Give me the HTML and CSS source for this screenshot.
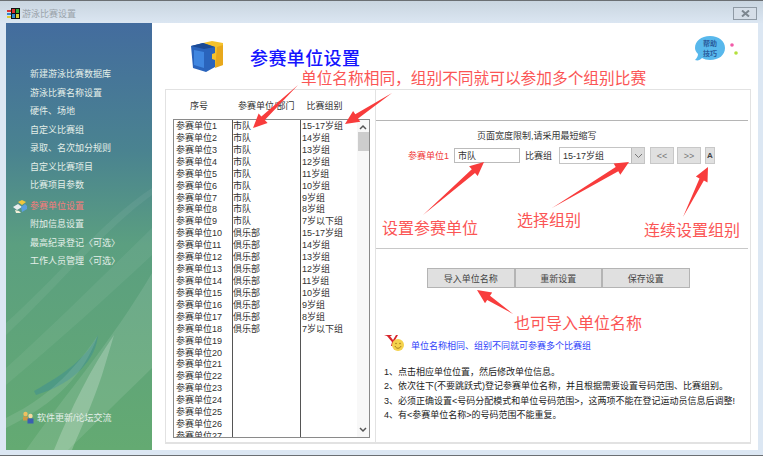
FILE: index.html
```html
<!DOCTYPE html>
<html lang="zh-CN">

<head>
  <meta charset="UTF-8">
  <title>游泳比赛设置</title>
  <link rel="stylesheet" href="styles.css">
</head>

<body>
  <div class="titlebar">
    <svg class="app-logo" width="13" height="11" viewBox="0 0 13 11">
      <rect x="0" y="2" width="4" height="2" fill="#d33" />
      <rect x="0" y="5" width="4" height="2" fill="#38c" />
      <rect x="0" y="8" width="4" height="2" fill="#dc3" />
      <rect x="4" y="0" width="9" height="11" fill="#111" />
      <rect x="5" y="1" width="3" height="4" fill="#d33" />
      <rect x="9" y="1" width="3" height="4" fill="#3a3" />
      <rect x="5" y="6" width="3" height="4" fill="#38c" />
      <rect x="9" y="6" width="3" height="4" fill="#dc3" />
    </svg>
    <span class="app-title">游泳比赛设置</span>
    <div class="close-btn">
      <svg width="9" height="7" viewBox="0 0 9 7">
        <path d="M1 0.5 L8 6.5 M8 0.5 L1 6.5" stroke="#7d8790" stroke-width="2" />
      </svg>
    </div>
  </div>

  <div class="window">
    <div class="sidebar">
      <svg class="swoosh" width="146" height="427" viewBox="0 0 146 427">
        <path d="M0 300 C50 255 100 195 146 165 L146 172 C100 205 50 265 0 312 Z" fill="#fff" opacity="0.06" />
        <path d="M0 345 C50 300 100 250 146 205 L146 232 C100 275 50 320 0 362 Z" fill="#fff" opacity="0.06" />
        <path d="M20 427 C60 370 105 320 146 250 L146 345 C110 380 85 405 62 427 Z" fill="#fff" opacity="0.1" />
        <path d="M28 368 C60 350 80 335 92 312 C90 335 70 360 30 372 Z" fill="#3f8f90" opacity="0.55" />
        <path d="M48 427 C65 385 85 345 108 312 L96 352 C85 385 75 405 66 427 Z" fill="#fff" opacity="0.22" />
        <path d="M0 395 C30 380 60 360 92 312 C75 360 40 385 0 405 Z" fill="#fff" opacity="0.1" />
      </svg>
      <ul class="nav">
        <li>新建游泳比赛数据库</li>
        <li>游泳比赛名称设置</li>
        <li>硬件、场地</li>
        <li>自定义比赛组</li>
        <li>录取、名次加分规则</li>
        <li>自定义比赛项目</li>
        <li>比赛项目参数</li>
        <li class="active">
          <svg class="active-icon" width="16" height="15" viewBox="0 0 16 15">
            <path d="M1 8 L6 5 L10 8 L5 11 Z" fill="#e8eef0" />
            <path d="M6 3 L10 1 L14 3 L10 6 Z" fill="#f2c83c" />
            <path d="M9 8 L13 5 L15 7 L15 10 L10 13 Z" fill="#5a9fe0" />
            <path d="M3 11 L7 12 L9 14 L4 14 Z" fill="#f4f0d8" />
          </svg>
          参赛单位设置
        </li>
        <li>附加信息设置</li>
        <li>最高纪录登记〈可选〉</li>
        <li>工作人员管理〈可选〉</li>
      </ul>
      <div class="forum">
        <svg width="12" height="13" viewBox="0 0 12 13">
          <circle cx="3.5" cy="3" r="2.2" fill="#f0c060" />
          <rect x="1" y="5.5" width="5" height="4" fill="#c94" />
          <circle cx="8.5" cy="5" r="2.2" fill="#f5d9a0" />
          <rect x="5.5" y="7.5" width="6" height="5" fill="#3a5fb0" />
        </svg>
        <span>软件更新/论坛交流</span>
      </div>
    </div>

    <div class="main">
      <div class="page-head">
        <svg class="cube" width="33" height="32" viewBox="0 0 33 32">
          <path d="M12 2 L21 0 L32 2 L32 24 L22 26 Z" fill="#f5c22c" />
          <path d="M26 6 L32 4 L32 24 L24 27 Z" fill="#e8a81c" />
          <path d="M0 5 L12 2 L24 6 L24 12 L21 13 L21 18 L24 19 L24 26 L15 31 L2 27 Z" fill="#2a64bc" />
          <path d="M0 5 L12 2 L24 6 L13 8 Z" fill="#1c4a94" />
          <path d="M3 9 L13 11 L13 27 L3 24 Z" fill="#3f86e0" />
        </svg>
        <h1>参赛单位设置</h1>
        <div class="help">
          <svg width="45" height="28" viewBox="0 0 45 28">
            <path d="M15 1 C24 1 30 6 30 13 C30 20 24 25 15 25 C12 25 9 24 7 23 C5 25 3 26 0 25 C2 23 3 21 3 19 C1 17 0 15 0 13 C0 6 6 1 15 1 Z" fill="#58b8ec" />
            <text x="15" y="11" class="help-text">帮助</text>
            <text x="15" y="21" class="help-text">技巧</text>
            <circle cx="37" cy="10" r="1.8" fill="#f25aa8" />
            <circle cx="41" cy="18" r="1.8" fill="#b4e03c" />
          </svg>
        </div>
      </div>

      <div class="panel">
        <div class="left-col">
          <div class="list-head">
            <span class="head-no">序号</span>
            <span class="head-unit">参赛单位/部门</span>
            <span class="head-group">比赛组别</span>
          </div>
          <div class="list-box">
            <div class="col col-no">
              <div>参赛单位1</div>
              <div>参赛单位2</div>
              <div>参赛单位3</div>
              <div>参赛单位4</div>
              <div>参赛单位5</div>
              <div>参赛单位6</div>
              <div>参赛单位7</div>
              <div>参赛单位8</div>
              <div>参赛单位9</div>
              <div>参赛单位10</div>
              <div>参赛单位11</div>
              <div>参赛单位12</div>
              <div>参赛单位13</div>
              <div>参赛单位14</div>
              <div>参赛单位15</div>
              <div>参赛单位16</div>
              <div>参赛单位17</div>
              <div>参赛单位18</div>
              <div>参赛单位19</div>
              <div>参赛单位20</div>
              <div>参赛单位21</div>
              <div>参赛单位22</div>
              <div>参赛单位23</div>
              <div>参赛单位24</div>
              <div>参赛单位25</div>
              <div>参赛单位26</div>
              <div>参赛单位27</div>
            </div>
            <div class="col col-unit">
              <div>市队</div>
              <div>市队</div>
              <div>市队</div>
              <div>市队</div>
              <div>市队</div>
              <div>市队</div>
              <div>市队</div>
              <div>市队</div>
              <div>市队</div>
              <div>俱乐部</div>
              <div>俱乐部</div>
              <div>俱乐部</div>
              <div>俱乐部</div>
              <div>俱乐部</div>
              <div>俱乐部</div>
              <div>俱乐部</div>
              <div>俱乐部</div>
              <div>俱乐部</div>
            </div>
            <div class="col col-group">
              <div>15-17岁组</div>
              <div>14岁组</div>
              <div>13岁组</div>
              <div>12岁组</div>
              <div>11岁组</div>
              <div>10岁组</div>
              <div>9岁组</div>
              <div>8岁组</div>
              <div>7岁以下组</div>
              <div>15-17岁组</div>
              <div>14岁组</div>
              <div>13岁组</div>
              <div>12岁组</div>
              <div>11岁组</div>
              <div>10岁组</div>
              <div>9岁组</div>
              <div>8岁组</div>
              <div>7岁以下组</div>
            </div>
            <div class="scrollbar">
              <svg width="8" height="6" viewBox="0 0 8 6">
                <path d="M1 5 L4 2 L7 5" fill="none" stroke="#555" stroke-width="1.5" />
              </svg>
              <div class="thumb"></div>
              <svg class="scroll-down" width="8" height="6" viewBox="0 0 8 6">
                <path d="M1 1 L4 4 L7 1" fill="none" stroke="#555" stroke-width="1.5" />
              </svg>
            </div>
          </div>
        </div>

        <div class="right-col">
          <div class="right-top"></div>
          <div class="form-section">
            <p class="limit-note">页面宽度限制,请采用最短缩写</p>
            <div class="form-row">
              <span class="unit-label">参赛单位1</span>
              <input class="unit-input" type="text" value="市队">
              <span class="group-label">比赛组</span>
              <div class="combo">
                <span>15-17岁组</span>
                <div class="combo-arrow">
                  <svg width="9" height="6" viewBox="0 0 9 6">
                    <path d="M1 1 L4.5 4.5 L8 1" fill="none" stroke="#777" stroke-width="1" />
                  </svg>
                </div>
              </div>
              <button class="nav-btn">&lt;&lt;</button>
              <button class="nav-btn">&gt;&gt;</button>
              <button class="a-btn">A</button>
            </div>
          </div>
          <div class="action-section">
            <div class="actions">
              <button>导入单位名称</button>
              <button>重新设置</button>
              <button>保存设置</button>
            </div>
            <div class="tip">
              <svg width="22" height="18" viewBox="0 0 22 18">
                <path d="M0 1 L8 1 L7 2 L6 2 L9 6 L12 1 L14 1 L10 8 L10 12 L7 12 L8 8 L3 2 Z" fill="#d8262c" />
                <circle cx="14" cy="11" r="6" fill="#f4d24c" />
                <path d="M11 12 C12 15 16 15 17 12" fill="none" stroke="#a87c1c" stroke-width="1" />
                <circle cx="12" cy="9.5" r="0.8" fill="#a87c1c" />
                <circle cx="16" cy="9.5" r="0.8" fill="#a87c1c" />
              </svg>
              <span>单位名称相同、组别不同就可参赛多个比赛组</span>
            </div>
            <ol class="notes">
              <li>1、点击相应单位位置&#xFF0C;然后修改单位信息。</li>
              <li>2、依次往下(不要跳跃式)登记参赛单位名称&#xFF0C;并且根据需要设置号码范围、比赛组别。</li>
              <li>3、必须正确设置&lt;号码分配模式和单位号码范围&gt;&#xFF0C;这两项不能在登记运动员信息后调整!</li>
              <li>4、有&lt;参赛单位名称&gt;的号码范围不能重复。</li>
            </ol>
          </div>
        </div>
      </div>
    </div>
  </div>

  <!-- red notes drawn on top of the screenshot -->
  <svg class="arrows" width="763" height="456" viewBox="0 0 763 456">
    <polygon points="298,85 264.8,120.1 267.6,123 253,128 258.6,113.6 261.4,116.5" />
    <polygon points="392,93 358.1,118.4 360.3,121.7 345,124 353.1,110.9 355.3,114.2" />
    <polygon points="423,215 475,173.1 477.7,176.1 484,162 469.1,166.3 471.8,169.3" />
    <polygon points="552,208 618.3,171.3 620.3,174.8 629,162 613.7,163.6 615.7,167.1" />
    <polygon points="683,217 703.9,180.6 707.5,182.4 708,167 695.9,176.6 699.5,178.4" />
    <polygon points="513,314 490,295.7 492.2,292.4 477,290 485,303.2 487.2,299.9" />
  </svg>
  <span class="mark mark-top">单位名称相同&#xFF0C;组别不同就可以参加多个组别比赛</span>
  <span class="mark mark-unit">设置参赛单位</span>
  <span class="mark mark-group">选择组别</span>
  <span class="mark mark-next">连续设置组别</span>
  <span class="mark mark-import">也可导入单位名称</span>
</body>

</html>
```

FILE: styles.css
```css
* {
  box-sizing: border-box;
}

body {
  margin: 0;
  width: 763px;
  height: 456px;
  position: relative;
  overflow: hidden;
  background-color: #dce7f3;
  font-family: "Liberation Sans", "Noto Sans CJK SC", sans-serif;
  font-size: 9px;
  color: #333;
  border-top: 1px solid #6b6f73;
  border-bottom: 1px solid #6b6f73;
}

/* title bar */
.titlebar {
  height: 22px;
  display: flex;
  align-items: center;
  padding: 3px 6px 0 7px;
  background: linear-gradient(#c9d5e0, #dbe6f2);
}

.app-title {
  margin-left: 2px;
  color: #9aa3aa;
  font-size: 9px;
}

.close-btn {
  margin-left: auto;
  width: 24px;
  height: 13px;
  display: flex;
  align-items: center;
  justify-content: center;
  border: 1px solid #8f9aa5;
  background-color: #d5dee8;
}

.window {
  height: 427px;
  display: flex;
  padding-left: 6px;
}

/* left menu */
.sidebar {
  width: 146px;
  height: 100%;
  position: relative;
  flex-shrink: 0;
  background: linear-gradient(#436c9e 0%, #4a8390 30%, #5b9f80 52%, #64aa72 100%);
  color: #e4efe9;
}

.swoosh {
  position: absolute;
  top: 0;
  left: 0;
}

.nav {
  position: relative;
  list-style: none;
  margin: 0;
  padding: 42px 0 0 24px;
  line-height: 18.5px;
}

.nav .active {
  position: relative;
  margin-top: 2px;
  color: #f77b7b;
}

.active-icon {
  position: absolute;
  left: -18px;
  top: 2px;
}

.forum {
  position: absolute;
  left: 16px;
  top: 388px;
  display: flex;
  align-items: center;
  gap: 3px;
}

/* main area */
.main {
  width: 606px;
  height: 100%;
  background-color: #fff;
  padding: 0 7px 6px 13px;
  display: flex;
  flex-direction: column;
}

.page-head {
  height: 66px;
  flex-shrink: 0;
  display: flex;
  align-items: flex-start;
  padding: 18px 0 0 26px;
}

.page-head h1 {
  margin: 4px 0 0 26px;
  font-size: 18px;
  line-height: 24px;
  font-weight: 500;
  letter-spacing: 0.4px;
  color: #1414ff;
  font-family: "Noto Sans CJK SC", sans-serif;
}

.help {
  margin: -6px 0 0 auto;
  padding-right: 11px;
}

.help-text {
  font-size: 7px;
  fill: #2a5c9c;
  text-anchor: middle;
  font-weight: 700;
}

.panel {
  flex: 1;
  display: flex;
  border: 1px solid #e2e2e2;
  border-bottom-width: 2px;
  min-height: 0;
}

.left-col {
  width: 210px;
  flex-shrink: 0;
  padding: 0 5px 4px 7px;
  border-right: 1px solid #e2e2e2;
  display: flex;
  flex-direction: column;
}

.list-head {
  height: 29px;
  flex-shrink: 0;
  display: flex;
  align-items: center;
  padding-top: 2px;
  color: #333;
}

.head-no {
  margin-left: 17px;
  font-size: 9px;
}

.head-unit {
  margin-left: 30px;
}

.head-group {
  margin-left: 12px;
}

.list-box {
  flex: 1;
  min-height: 0;
  display: flex;
  overflow: hidden;
  border: 1px solid #8a8a8a;
  line-height: 11.92px;
}

.col {
  overflow: hidden;
  padding-top: 1px;
}

.col-no {
  width: 59px;
  padding-left: 2px;
  border-right: 1px solid #555;
}

.col-unit {
  width: 68px;
  border-right: 1px solid #555;
}

.col-group {
  flex: 1;
  padding-left: 1px;
}

.scrollbar {
  width: 12px;
  display: flex;
  flex-direction: column;
  align-items: center;
  padding: 4px 0;
  background-color: #f8f8f8;
}

.thumb {
  width: 11px;
  height: 19px;
  margin-top: 2px;
  background-color: #cdcdcd;
}

.scroll-down {
  margin-top: auto;
}

.right-col {
  flex: 1;
  min-width: 0;
  display: flex;
  flex-direction: column;
  padding-right: 2px;
}

.right-top {
  height: 31px;
  border-bottom: 1px solid #b5b5b5;
}

/* form */
.form-section {
  height: 128px;
  border-bottom: 1px solid #c8c8c8;
  padding-top: 9px;
}

.limit-note {
  margin: 0 0 5px;
  height: 12px;
  line-height: 12px;
  padding-left: 101px;
}

.form-row {
  display: flex;
  align-items: center;
  height: 17px;
  padding-left: 32px;
}

.unit-label {
  width: 46px;
  color: #f03a3a;
}

.unit-input {
  width: 66px;
  height: 15px;
  padding: 0 3px;
  border: 1px solid #bbb;
  font: inherit;
  color: #333;
}

.group-label {
  margin-left: 5px;
  width: 34px;
}

.combo {
  width: 86px;
  height: 17px;
  display: flex;
  align-items: center;
  justify-content: space-between;
  border: 1px solid #c4c4c4;
  padding-left: 3px;
}

.combo-arrow {
  width: 13px;
  height: 15px;
  display: flex;
  align-items: center;
  justify-content: center;
  background-color: #dcdcdc;
  border-left: 1px solid #bbb;
}

.nav-btn,
.a-btn,
.actions button {
  padding: 0;
  border: 1px solid #c8c8c8;
  background-color: #e0e0e0;
  font: inherit;
  color: #444;
}

.nav-btn {
  width: 24px;
  height: 17px;
  margin-left: 3px;
  color: #777;
}

.nav-btn:first-of-type {
  margin-left: 5px;
}

.a-btn {
  width: 10px;
  height: 17px;
  margin-left: 4px;
  font-weight: 700;
  font-size: 8px;
}

/* buttons and notes */
.action-section {
  flex: 1;
  padding: 19px 0 0 8px;
}

.actions {
  display: flex;
  margin-left: 43px;
}

.actions button {
  width: 87.5px;
  height: 20px;
  border-color: #b4b4b4;
}

.tip {
  display: flex;
  align-items: center;
  gap: 5px;
  margin: 46px 0 0 0;
  color: #2f42fa;
  height: 18px;
}

.tip span {
  padding-top: 5px;
}

.notes {
  list-style: none;
  margin: 13px 0 0;
  padding: 0;
  line-height: 14.4px;
  color: #222;
}

/* overlay: arrows and red captions */
.arrows {
  position: absolute;
  top: -1px;
  left: 0;
  pointer-events: none;
}

.arrows polygon {
  fill: #f83c3c;
}

.mark {
  position: absolute;
  color: #fb5555;
  font-family: "Noto Sans CJK SC", sans-serif;
  font-size: 16px;
  line-height: 20px;
  white-space: nowrap;
}

.mark-top {
  left: 301px;
  top: 67px;
  font-size: 15.7px;
}

.mark-unit {
  left: 382px;
  top: 216px;
}

.mark-group {
  left: 517px;
  top: 208px;
}

.mark-next {
  left: 644px;
  top: 218px;
}

.mark-import {
  left: 514px;
  top: 311px;
}
```
